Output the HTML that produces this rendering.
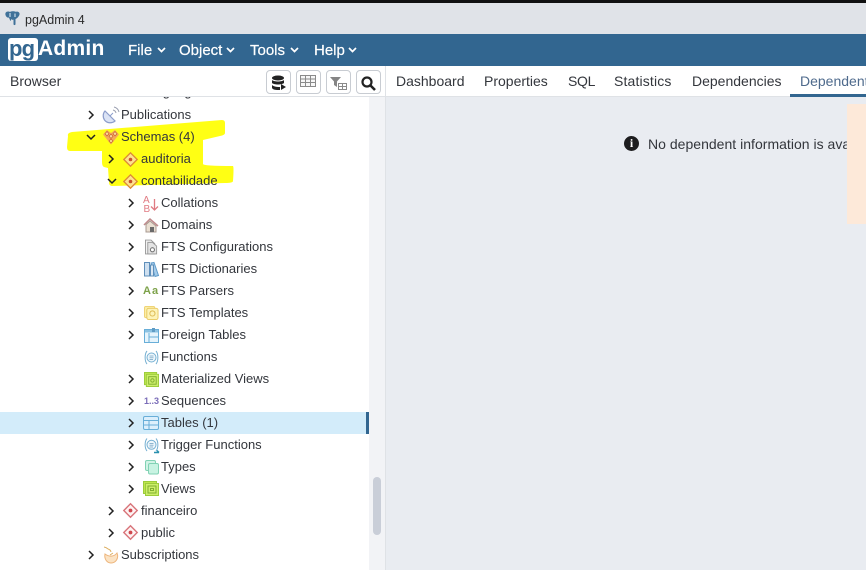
<!DOCTYPE html>
<html><head><meta charset="utf-8"><style>
html,body{margin:0;padding:0;background:#fff}
#p{position:relative;width:866px;height:570px;overflow:hidden;font-family:"Liberation Sans",sans-serif;color:#222;background:#fff}
#p div{position:absolute}
.t{font-size:13px;white-space:nowrap;color:#33363c;line-height:16px}
.m{color:#fff;font-size:15px;top:42px;line-height:18px;white-space:nowrap;-webkit-text-stroke:.2px #fff}
.tab{font-size:14px;top:73px;line-height:16px;white-space:nowrap;color:#33363c}
.b{top:70px;width:25px;height:24px;border:1px solid #c8ccd2;border-radius:4px;background:#fff;box-sizing:border-box}
svg{position:absolute;overflow:visible}
</style></head><body><div id="p">
<div style="left:0;top:0;width:866px;height:3px;background:#111"></div>
<div style="left:0;top:3px;width:866px;height:31px;background:#e0e3e8"></div>
<svg style="left:5px;top:11px" width="15" height="15" viewBox="0 0 15 15"><path d="M3 0.500C1 0.500 0 2 0.500 4C1 6 2.500 7 4 6.500C4.500 8 5 9.500 6 10V8C7 9 8 9 8.500 8.500V13C8.500 14.500 10.500 14.500 10.500 13V8C12 7.500 14 5.500 14.500 3.500C15 1.500 13 0 11 0.800C9 0 6 0 5 1C4.500 0.700 3.800 0.500 3 0.500Z" fill="#3f7199"/><path d="M5 2V6M10 2.500V6" stroke="#c9dcea" stroke-width="1.200"/></svg>
<div style="left:25px;top:11px;font-size:12.500px;line-height:16px;color:#2a2a2a;top:12px">pgAdmin 4</div>

<div style="left:0;top:34px;width:866px;height:32px;background:#326690"></div>
<div style="left:8px;top:38px;width:30px;height:23px;background:#fff;border-radius:3px"></div>
<div style="left:9px;top:37px;font:bold 22px/24px 'Liberation Sans',sans-serif;color:#326690;letter-spacing:-.8px">pg</div>
<div style="left:38px;top:36px;font:bold 21px/26px 'Liberation Sans',sans-serif;color:#fff;letter-spacing:.25px">Admin</div>
<div class="m" style="left:128px">File</div>
<svg style="left:157px;top:47px" width="9" height="6"><path d="M1 1L4.500 4.500L8 1" fill="none" stroke="#fff" stroke-width="1.700"/></svg>
<div class="m" style="left:179px">Object</div>
<svg style="left:226px;top:47px" width="9" height="6"><path d="M1 1L4.500 4.500L8 1" fill="none" stroke="#fff" stroke-width="1.700"/></svg>
<div class="m" style="left:250px">Tools</div>
<svg style="left:290px;top:47px" width="9" height="6"><path d="M1 1L4.500 4.500L8 1" fill="none" stroke="#fff" stroke-width="1.700"/></svg>
<div class="m" style="left:314px">Help</div>
<svg style="left:348px;top:47px" width="9" height="6"><path d="M1 1L4.500 4.500L8 1" fill="none" stroke="#fff" stroke-width="1.700"/></svg>

<div style="left:0;top:66px;width:385px;height:31px;background:#fff;border-bottom:1px solid #dfe2e6;box-sizing:border-box"></div>
<div class="tab" style="left:10px">Browser</div>
<div class="b" style="left:266px"></div><div class="b" style="left:296px"></div><div class="b" style="left:326px"></div><div class="b" style="left:356px"></div>
<svg style="left:271px;top:75px" width="16" height="16" viewBox="0 0 16 16"><ellipse cx="7" cy="3" rx="6" ry="2.500" fill="#222"/><path d="M1 5C3 7 11 7 13 5V8C11 10 3 10 1 8ZM1 10C3 12 7 12 9 12V15C5 15 2 15 1 13Z" fill="#222"/><path d="M10 9L15 12L10 15Z" fill="#222"/></svg>
<svg style="left:300px;top:75px" width="16" height="12" viewBox="0 0 16 12"><path d="M.5.500H15.500V11.500H.5ZM.5 4H15.500M.5 7.500H15.500M5.500 .5V11.500M10.500 .5V11.500" fill="#f7f7f7" stroke="#8a8a8a"/></svg>
<svg style="left:330px;top:77px" width="17" height="13" viewBox="0 0 17 13"><path d="M0 0H11L7 4.500V10L4 8V4.500Z" fill="#858585"/><path d="M8.500 6.500H16.500V12.500H8.500ZM8.500 9.500H16.500M12.500 6.500V12.500" fill="#fff" stroke="#8a8a8a"/></svg>
<svg style="left:361px;top:76px" width="15" height="15" viewBox="0 0 15 15"><circle cx="6" cy="6" r="4.500" fill="none" stroke="#222" stroke-width="2.200"/><path d="M9.500 9.500L14 14" stroke="#222" stroke-width="2.600"/></svg>

<!-- right -->
<div style="left:385px;top:66px;width:1px;height:504px;background:#dfe2e6"></div>
<div style="left:386px;top:97px;width:480px;height:473px;background:#e9ecf1"></div>
<div style="left:386px;top:96px;width:480px;height:1px;background:#dfe2e6"></div>
<div class="tab" style="left:396px">Dashboard</div>
<div class="tab" style="left:484px">Properties</div>
<div class="tab" style="left:568px;letter-spacing:-.3px">SQL</div>
<div class="tab" style="left:614px;letter-spacing:.15px">Statistics</div>
<div class="tab" style="left:692px">Dependencies</div>
<div class="tab" style="left:800px;color:#4e6a8c">Dependents</div>
<div style="left:790px;top:94px;width:76px;height:3px;background:#326690"></div>
<div style="left:847px;top:104px;width:19px;height:120px;background:#fde9d9"></div>
<div style="left:624px;top:136px;width:15px;height:15px;border-radius:50%;background:#1d1d1f"></div>
<div style="left:624px;top:136px;width:15px;text-align:center;color:#fff;font:bold 12px/15px 'Liberation Serif',serif">i</div>
<div style="left:648px;top:136px;width:199px;overflow:hidden;font-size:14px;line-height:16px;white-space:nowrap;color:#33363c;letter-spacing:.02px">No dependent information is available</div>

<!-- tree -->
<div style="left:0;top:97px;width:369px;height:473px;overflow:hidden">
<div class="t" style="left:141px;top:-13px">Languages</div>
</div>
<div style="left:0;top:412px;width:369px;height:22px;background:#d3ecfa"></div>
<div style="left:366px;top:412px;width:3px;height:22px;background:#326690"></div>
<div style="left:369px;top:97px;width:16px;height:473px;background:#f2f3f6"></div>
<div style="left:373px;top:477px;width:8px;height:58px;border-radius:4px;background:#c9ced8"></div>

<svg style="left:0;top:0" width="369" height="570"><path fill="#ffff14" d="M68 136Q67 133 72 132L222 120Q225 120 225 123L225 133Q225 135 220 136L203 140L203 164Q203 166 233 166Q234 167 233 181Q233 183 225 183L112 186Q109 186 109 182L108 168L104 167Q102 166 102 162L102 151L70 151Q67 151 67 147Z"/></svg>

<svg style="left:0;top:-.5px" width="369" height="570" fill="none" stroke="#222" stroke-width="1.500">
<path d="M89 111L93 115L89 119M87 135L91 139L95 135M109 155L113 159L109 163M108 179L112 183L116 179"/>
<path d="M129 199L133 203L129 207M129 221L133 225L129 229M129 243L133 247L129 251M129 265L133 269L129 273M129 287L133 291L129 295M129 309L133 313L129 317M129 331L133 335L129 339M129 375L133 379L129 383M129 397L133 401L129 405M129 419L133 423L129 427M129 441L133 445L129 449M129 463L133 467L129 471M129 485L133 489L129 493"/>
<path d="M109 507L113 511L109 515M109 529L113 533L109 537M89 551L93 555L89 559"/>
</svg>

<!-- icons -->
<svg style="left:102px;top:106px" width="18" height="18" viewBox="0 0 18 18"><path d="M3 5L13 15C10 17.500 5 17.500 2.500 14C0.500 11 1 7 3 5Z" fill="#dbe3f5" stroke="#8c9dcb" stroke-width="1.200"/><path d="M8 10L11 7" stroke="#8c9dcb"/><path d="M11 4A4 4 0 0 1 14 7M12 1A7 7 0 0 1 17 6" fill="none" stroke="#9a9fb0"/></svg>
<svg style="left:103px;top:130px" width="16" height="15" viewBox="0 0 16 15"><path d="M4 0L8 3L12 0L16 4.500L8 14.500L0 4.500Z" fill="#f5a95a"/><g fill="#f9d99a" stroke="#c8602e" stroke-width=".7"><path d="M4 1.500L6 3.700L4 6L2 3.700Z"/><path d="M12 1.500L14 3.700L12 6L10 3.700Z"/><path d="M8 4L10 6.200L8 8.500L6 6.200Z"/><path d="M8 9L10 11L8 13L6 11Z"/></g></svg>
<svg style="left:123px;top:152px" width="15" height="15" viewBox="0 0 15 15"><path d="M7.500 .8L14.200 7.500L7.500 14.200L.8 7.500Z" fill="#fde28e" stroke="#dd8a35" stroke-width="1.300"/><circle cx="7.500" cy="7.500" r="1.800" fill="#c8502a"/></svg>
<svg style="left:123px;top:174px" width="15" height="15" viewBox="0 0 15 15"><path d="M7.500 .8L14.200 7.500L7.500 14.200L.8 7.500Z" fill="#fde28e" stroke="#dd8a35" stroke-width="1.300"/><circle cx="7.500" cy="7.500" r="1.800" fill="#c8502a"/></svg>
<svg style="left:143px;top:195px" width="16" height="17"><text x="0" y="8" font-size="10" fill="#e07a82" font-family="Liberation Sans">A</text><text x="0.500" y="17" font-size="10" fill="#e07a82" font-family="Liberation Sans">B</text><path d="M11.500 4V15M8 11.500L11.500 15L15 11.500" fill="none" stroke="#e07a82" stroke-width="1.300"/></svg>
<svg style="left:143px;top:218px" width="16" height="15" viewBox="0 0 16 15"><path d="M1 7L7 1L15 8" fill="none" stroke="#c08a8c" stroke-width="1.500"/><path d="M3 6.500V14H13V8L7 3Z" fill="#eadfd2" stroke="#a89a90"/><rect x="7" y="9" width="4" height="5" fill="#6a6a6a"/></svg>
<svg style="left:145px;top:239px" width="13" height="16" viewBox="0 0 14 16"><path d="M.5.500H6.500L10.500 4.500V15.500H.5Z" fill="#f2f2f2" stroke="#999"/><path d="M3 3H8L12.500 7V15.500H3Z" fill="#e4e4e4" stroke="#999"/><circle cx="8" cy="11" r="2.200" fill="#fff" stroke="#777" stroke-width="1.200"/></svg>
<svg style="left:144px;top:262px" width="15" height="15" viewBox="0 0 15 15"><rect x=".5" y=".5" width="5" height="13.500" fill="#cfe0f0" stroke="#5f8fba"/><path d="M7 1L10 .5L14.500 13.500L11 14.500Z" fill="#a5cbe9" stroke="#5f9ccb"/><rect x="6.500" y="3" width="3" height="11" fill="#dbe8f3" stroke="#5f8fba"/></svg>
<div style="left:143px;top:284px;font:bold 11px/14px 'Liberation Sans',sans-serif;color:#7da24a;letter-spacing:1px;white-space:nowrap">Aa</div>
<svg style="left:144px;top:306px" width="15" height="14" viewBox="0 0 16 15"><rect x=".5" y=".5" width="11" height="12" rx="1.500" fill="#fbeea6" stroke="#eed070"/><rect x="3" y="2.500" width="12" height="12" rx="2" fill="#fdf3b8" stroke="#e8c860"/><circle cx="9" cy="8" r="2.800" fill="none" stroke="#dcb850"/></svg>
<svg style="left:144px;top:328px" width="15" height="15" viewBox="0 0 15 15"><rect x=".5" y="1.500" width="14" height="13" fill="#e6f4fc" stroke="#68aed8"/><rect x="1" y="2" width="13" height="2.500" fill="#8cc2e2"/><path d="M5 5V14M5 9H14" stroke="#68aed8"/><rect x="8" y="0" width="3" height="4" fill="#5f9bc4"/></svg>
<svg style="left:144px;top:350px" width="15" height="15" viewBox="0 0 15 15" fill="none" stroke="#76b0d2"><path d="M3 1C.5 4 .5 11 3 14M12 1C14.500 4 14.500 11 12 14"/><circle cx="7.500" cy="7.500" r="4.500" fill="#eef7fc"/><path d="M5.500 6H9.500M5.500 7.800H9.500M5.500 9.500H9" stroke="#8fb5cf"/></svg>
<svg style="left:144px;top:372px" width="15" height="15" viewBox="0 0 16 16"><rect x=".5" y=".5" width="13" height="13" fill="#bfe54e" stroke="#9ccc3c"/><rect x="2.500" y="2.500" width="13" height="13" fill="#cdee6a" stroke="#9ccc3c"/><rect x="5" y="5" width="8" height="8" fill="none" stroke="#7fae30"/><circle cx="9" cy="9" r="1.800" fill="none" stroke="#7fae30"/></svg>
<div style="left:144px;top:394px;font:bold 9px/14px 'Liberation Sans',sans-serif;color:#7a6cb8;white-space:nowrap">1..3</div>
<svg style="left:143px;top:416px" width="16" height="14" viewBox="0 0 16 14"><rect x=".5" y=".5" width="15" height="13" rx="1.500" fill="#dceffc" stroke="#68aed8"/><path d="M.5 4.500H15.500M.5 9H15.500M6 4.500V13.500" fill="none" stroke="#68aed8"/></svg>
<svg style="left:144px;top:438px" width="16" height="16" viewBox="0 0 16 16" fill="none" stroke="#76b0d2"><path d="M3 .5C.5 3.500 .5 10 3 13M12 .5C14.500 3.500 14.500 10 12 13"/><circle cx="7.500" cy="6.800" r="4.500" fill="#eef7fc"/><path d="M5.500 5.500H9.500M5.500 7.200H9.500M5.500 9H9" stroke="#8fb5cf"/><path d="M10 14.500H15M13 12.500L15 14.500" stroke="#2a90ae" stroke-width="1.500"/></svg>
<svg style="left:145px;top:460px" width="14" height="15" viewBox="0 0 14 15"><rect x=".5" y=".5" width="10" height="10" rx="1.500" fill="#d2f3e6" stroke="#82d2b4"/><rect x="3.500" y="3.500" width="10" height="10.500" rx="1.500" fill="#c8f3e2" stroke="#82d2b4"/></svg>
<svg style="left:143px;top:481px" width="16" height="15" viewBox="0 0 16 15"><rect x=".5" y=".5" width="13" height="12" fill="#bfe54e" stroke="#9ccc3c"/><rect x="2.500" y="2.500" width="13" height="12" fill="#cdee6a" stroke="#9ccc3c"/><rect x="5" y="5" width="8" height="7" fill="none" stroke="#7fae30"/><rect x="7.500" y="7.500" width="3" height="2" fill="none" stroke="#7fae30"/></svg>
<svg style="left:123px;top:503px" width="15" height="15" viewBox="0 0 15 15"><path d="M7.500 .8L14.200 7.500L7.500 14.200L.8 7.500Z" fill="#fdf3f3" stroke="#d8747a" stroke-width="1.400"/><circle cx="7.500" cy="7.500" r="1.900" fill="#d0484e"/></svg>
<svg style="left:123px;top:525px" width="15" height="15" viewBox="0 0 15 15"><path d="M7.500 .8L14.200 7.500L7.500 14.200L.8 7.500Z" fill="#fdf3f3" stroke="#d8747a" stroke-width="1.400"/><circle cx="7.500" cy="7.500" r="1.900" fill="#d0484e"/></svg>
<svg style="left:102px;top:546px" width="18" height="18" viewBox="0 0 18 18"><path d="M3 8C7 11 12 11 15 7C17 12 14 17 9 17C5 17 2 13 3 8Z" fill="#fbe3c4" stroke="#edb47a"/><path d="M8 9L11 7M6 3A4 4 0 0 1 9 6M2 1A7 7 0 0 1 6 3" fill="none" stroke="#dcae60"/></svg>

<div class="t" style="left:121px;top:107px">Publications</div>
<div class="t" style="left:121px;top:129px">Schemas (4)</div>
<div class="t" style="left:141px;top:151px">auditoria</div>
<div class="t" style="left:141px;top:173px">contabilidade</div>
<div class="t" style="left:161px;top:195px">Collations</div>
<div class="t" style="left:161px;top:217px">Domains</div>
<div class="t" style="left:161px;top:239px">FTS Configurations</div>
<div class="t" style="left:161px;top:261px">FTS Dictionaries</div>
<div class="t" style="left:161px;top:283px">FTS Parsers</div>
<div class="t" style="left:161px;top:305px">FTS Templates</div>
<div class="t" style="left:161px;top:327px">Foreign Tables</div>
<div class="t" style="left:161px;top:349px">Functions</div>
<div class="t" style="left:161px;top:371px">Materialized Views</div>
<div class="t" style="left:161px;top:393px">Sequences</div>
<div class="t" style="left:161px;top:415px">Tables (1)</div>
<div class="t" style="left:161px;top:437px">Trigger Functions</div>
<div class="t" style="left:161px;top:459px">Types</div>
<div class="t" style="left:161px;top:481px">Views</div>
<div class="t" style="left:141px;top:503px">financeiro</div>
<div class="t" style="left:141px;top:525px">public</div>
<div class="t" style="left:121px;top:547px">Subscriptions</div>
</div></body></html>
